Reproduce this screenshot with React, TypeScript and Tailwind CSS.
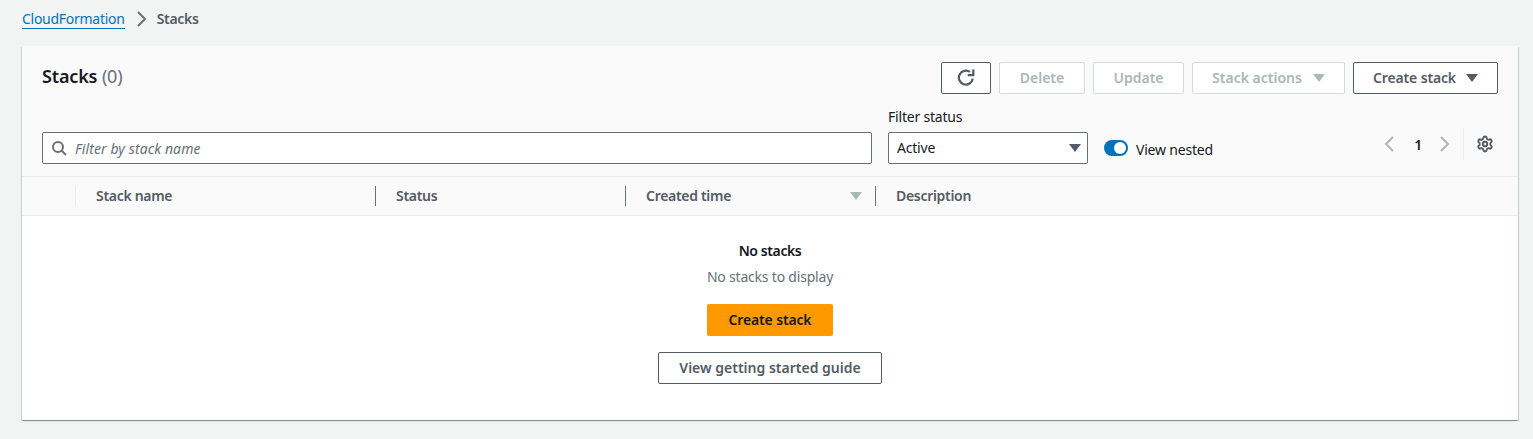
import { Settings } from 'lucide-react'

const strong = 'font-semibold'

function Caret({ color }: { color: string }) {
  return (
    <svg width="12" height="8" viewBox="0 0 12 8" className="shrink-0">
      <path d="M0 0h12L6 8z" fill={color} />
    </svg>
  )
}

function Chevron({ dir, color, size = 16 }: { dir: 'left' | 'right'; color: string; size?: number }) {
  return (
    <svg width={size} height={size} viewBox="0 0 16 16" fill="none" stroke={color} strokeWidth="2">
      <path d={dir === 'left' ? 'M11 1 4 8l7 7' : 'M5 1l7 7-7 7'} />
    </svg>
  )
}

function DisabledButton({ label, width, caret }: { label: string; width: string; caret?: boolean }) {
  return (
    <div className={`${width} h-8 flex items-center justify-center gap-[11px] border border-[#d5dbdb] rounded-[2px] bg-white text-[#aab7b8] text-[14px] tracking-normal ${strong}`}>
      <span className="mb-[2px]">{label}</span>
      {caret && <Caret color="#aab7b8" />}
    </div>
  )
}

function HeaderCell({ label, width, sorted }: { label: string; width: string; sorted?: boolean }) {
  return (
    <div className={`${width} h-5 flex items-center justify-between border-l border-[#687078] pl-5 pr-[13px]`}>
      <span className={`mb-[2px] text-[14px] text-[#545b64] tracking-[-0.3px] ${strong}`}>{label}</span>
      {sorted && <Caret color="#aab7b8" />}
    </div>
  )
}

export default function App() {
  return (
    <div className="font-['Noto_Sans','Open_Sans',sans-serif] tracking-[-0.2px] w-[1533px] h-[439px] bg-[#f2f3f3] overflow-hidden pl-[22px] pr-[15px]">
      <nav className="h-[46px] flex items-start pt-[9px] gap-2 text-[14px] leading-[20px]">
        <a className="text-[#0073bb] border-b border-[#0073bb] leading-[19px] tracking-[-0.27px]">CloudFormation</a>
        <span className="mt-[2px]"><Chevron dir="right" color="#687078" /></span>
        <span className={`text-[#545b64] tracking-[-0.3px] ${strong}`}>Stacks</span>
      </nav>

      <section className="h-[374px] bg-white rounded-[1px] shadow-[0_1px_1px_0_rgba(0,28,36,0.3),1px_1px_1px_0_rgba(0,28,36,0.15),-1px_1px_1px_0_rgba(0,28,36,0.15)]">
        <div className="h-[131px] bg-[#fafafa] border-b border-[#eaeded] px-5 flex flex-col">
          <div className="flex items-start justify-between pt-4">
            <h1 className={`-mt-px text-[18px] leading-[30px] text-[#16191f] tracking-[-0.15px] ${strong}`}>
              Stacks <span className="font-normal text-[#687078]">(0)</span>
            </h1>
            <div className="flex gap-2">
              <div className="w-[50px] h-8 flex items-center justify-center border border-[#545b64] rounded-[2px] bg-white">
                <svg width="18" height="18" viewBox="0 0 16 16" fill="none" stroke="#545b64" strokeWidth="2">
                  <path d="M14 8.5A6.2 6.2 0 1 1 11.5 2.6" />
                  <path d="M14.5 0.5v5H9.5" />
                </svg>
              </div>
              <DisabledButton label="Delete" width="w-[86px]" />
              <DisabledButton label="Update" width="w-[91px]" />
              <DisabledButton label="Stack actions" width="w-[153px]" caret />
              <div className={`w-[145px] h-8 flex items-center justify-center gap-[10px] border border-[#545b64] rounded-[2px] bg-white text-[#545b64] text-[14px] tracking-[-0.15px] ${strong}`}>
                <span className="mb-[2px]">Create stack</span>
                <Caret color="#545b64" />
              </div>
            </div>
          </div>
          <div className="flex items-start mt-[13px]">
            <div className="w-[830px] h-8 mt-[25px] flex items-center gap-[8px] pl-2 border border-[#687078] rounded-[2px] bg-white">
              <svg width="16" height="16" viewBox="0 0 16 16" fill="none" stroke="#687078" strokeWidth="2">
                <circle cx="7" cy="7" r="5" />
                <path d="m10.5 10.5 4.5 4.5" />
              </svg>
              <span className="text-[14px] italic tracking-[0.1px] text-[#687078]">Filter by stack name</span>
            </div>
            <div className="ml-4 w-[200px]">
              <div className="h-[25px] text-[14px] leading-[20px] text-[#16191f]">Filter status</div>
              <div className="h-8 flex items-center justify-between pl-2 pr-[6px] border border-[#687078] rounded-[2px] bg-white text-[14px] text-[#16191f]">
                <span className="mb-[2px]">Active</span>
                <Caret color="#545b64" />
              </div>
            </div>
            <div className="ml-4 mt-[25px] h-8 flex items-center gap-2">
              <div className="w-6 h-4 rounded-full bg-[#0073bb] flex items-center justify-end pr-[2px]">
                <div className="w-3 h-3 rounded-full bg-white" />
              </div>
              <span className="mt-[2px] text-[14px] text-[#16191f]">View nested</span>
            </div>
            <div className="ml-auto mt-[21px] mr-[5px] flex items-center">
              <Chevron dir="left" color="#aab7b8" />
              <span className={`ml-[16px] mr-[14px] text-[14px] text-[#16191f] ${strong}`}>1</span>
              <Chevron dir="right" color="#aab7b8" />
              <div className="h-8 ml-[11px] mr-[13px] border-l border-[#eaeded]" />
              <Settings size={18} color="#545b64" strokeWidth={2.5} className="-mx-px" />
            </div>
          </div>
        </div>

        <div className="h-[39px] bg-[#fafafa] border-b border-[#eaeded] flex items-center">
          <div className="w-[53px] h-5 shrink-0" />
          <div className="w-[300px] h-5 flex items-center border-l border-[#eaeded] pl-5">
            <span className={`mb-[2px] text-[14px] text-[#545b64] tracking-[-0.3px] ${strong}`}>Stack name</span>
          </div>
          <HeaderCell label="Status" width="w-[250px]" />
          <HeaderCell label="Created time" width="w-[250px]" sorted />
          <HeaderCell label="Description" width="w-[300px]" />
        </div>

        <div className="flex flex-col items-center pt-[25px]">
          <div className={`text-[14px] leading-[20px] text-[#16191f] tracking-[-0.4px] ${strong}`}>No stacks</div>
          <div className="mt-[6px] text-[14px] leading-[20px] text-[#687078]">No stacks to display</div>
          <div className={`mt-[17px] w-[126px] h-8 pb-[2px] flex items-center justify-center rounded-[2px] bg-[#ff9900] text-[14px] text-[#16191f] tracking-[-0.15px] ${strong}`}>
            Create stack
          </div>
          <div className={`mt-4 w-[224px] h-8 pb-[2px] flex items-center justify-center border border-[#545b64] rounded-[2px] bg-white text-[14px] text-[#545b64] tracking-normal ${strong}`}>
            View getting started guide
          </div>
        </div>
      </section>
    </div>
  )
}
